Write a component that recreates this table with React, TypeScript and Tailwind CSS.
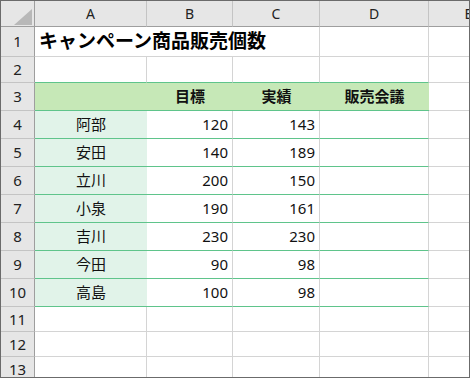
const rows = [
  { name: '阿部', target: 120, actual: 143 },
  { name: '安田', target: 140, actual: 189 },
  { name: '立川', target: 200, actual: 150 },
  { name: '小泉', target: 190, actual: 161 },
  { name: '吉川', target: 230, actual: 230 },
  { name: '今田', target: 90, actual: 98 },
  { name: '高島', target: 100, actual: 98 },
];

const font = { fontFamily: '"Noto Sans", "Noto Sans CJK JP", sans-serif' };

function RowHead({ n }: { n: number }) {
  return (
    <div className="flex items-center justify-center border-r border-b border-r-[#9e9e9e] border-b-[#c4c4c4] bg-[#e6e6e6] text-[15px] text-[#222]">
      {n}
    </div>
  );
}

function Blank({ className = '' }: { className?: string }) {
  return <div className={`border-r border-b border-[#d4d4d4] ${className}`} />;
}

export default function App() {
  const letters = ['A', 'B', 'C', 'D', 'E'];
  return (
    <div className="w-[470px] h-[378px] overflow-hidden border border-[#6b6b6b] bg-white" style={font}>
      <div className="grid grid-cols-[34px_112px_86px_87px_109px_80px] grid-rows-[26px_30px_26px_28px_28px_28px_28px_28px_28px_28px_28px_25px_25px_25px]">
        {/* column headers */}
        <div className="relative border-r border-b border-r-[#9e9e9e] border-b-[#9e9e9e] bg-[#e6e6e6]">
          <svg className="absolute left-[13px] top-[8px]" width="18" height="16" viewBox="0 0 18 16">
            <polygon points="18,0 18,16 0,16" fill="#b8b8b8" />
          </svg>
        </div>
        {letters.map((l) => (
          <div
            key={l}
            className="flex items-center justify-center border-r border-b border-r-[#c4c4c4] border-b-[#9e9e9e] bg-[#e6e6e6] text-[14px] text-[#222]"
          >
            {l}
          </div>
        ))}

        {/* row 1 */}
        <RowHead n={1} />
        <div className="col-span-3 flex items-center border-r border-b border-[#d4d4d4] pl-[4px] text-[19px] font-bold text-black whitespace-nowrap">
          キャンペーン商品販売個数
        </div>
        <Blank />
        <Blank />

        {/* row 2 */}
        <RowHead n={2} />
        <div className="border-r border-[#d4d4d4] border-b border-b-[#5fc48b]" />
        <div className="border-r border-[#d4d4d4] border-b border-b-[#5fc48b]" />
        <div className="border-r border-[#d4d4d4] border-b border-b-[#5fc48b]" />
        <div className="border-r border-[#d4d4d4] border-b border-b-[#5fc48b]" />
        <Blank />

        {/* row 3 header */}
        <RowHead n={3} />
        <div className="bg-[#c6e8b7] border-b border-[#5fc48b]" />
        <div className="flex items-center justify-center bg-[#c6e8b7] border-b border-[#5fc48b] text-[15px] font-bold text-[#111]">目標</div>
        <div className="flex items-center justify-center bg-[#c6e8b7] border-b border-[#5fc48b] text-[15px] font-bold text-[#111]">実績</div>
        <div className="flex items-center justify-center bg-[#c6e8b7] border-b border-[#5fc48b] text-[15px] font-bold text-[#111]">販売会議</div>
        <Blank />

        {rows.map((r, i) => (
          <div key={r.name} className="contents">
            <RowHead n={i + 4} />
            <div className="flex items-center justify-center bg-[#e1f3e9] border-b border-[#5fc48b] text-[15px] text-[#111]">
              {r.name}
            </div>
            <div className="flex items-center justify-end pr-[4px] border-r border-r-[#d4d4d4] border-b border-b-[#5fc48b] text-[15px] text-[#111]">
              {r.target}
            </div>
            <div className="flex items-center justify-end pr-[4px] border-r border-r-[#d4d4d4] border-b border-b-[#5fc48b] text-[15px] text-[#111]">
              {r.actual}
            </div>
            <div className="border-r border-r-[#d4d4d4] border-b border-b-[#5fc48b]" />
            <Blank />
          </div>
        ))}

        {[11, 12, 13].map((n) => (
          <div key={n} className="contents">
            <RowHead n={n} />
            <Blank />
            <Blank />
            <Blank />
            <Blank />
            <Blank />
          </div>
        ))}
      </div>
    </div>
  );
}
